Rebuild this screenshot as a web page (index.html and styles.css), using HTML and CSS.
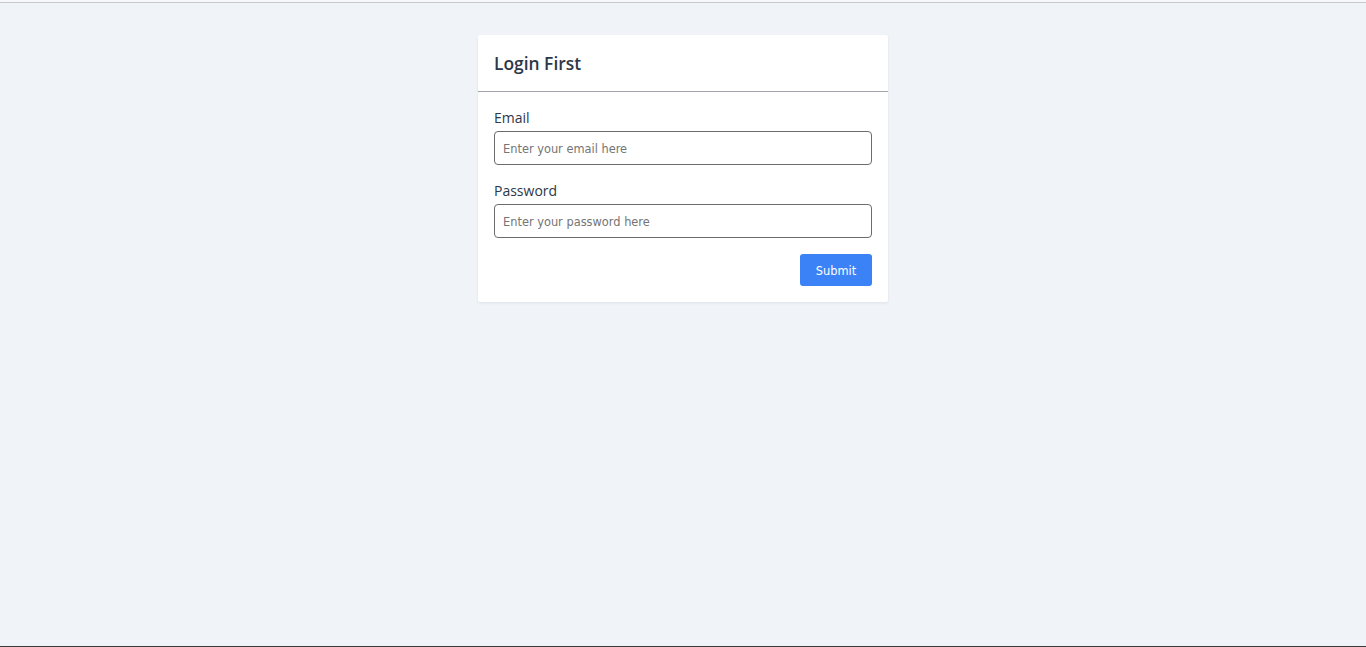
FILE: index.html
```html
<!DOCTYPE html>
<html>
<head>
<meta charset="utf-8">
<link rel="stylesheet" href="styles.css">
</head>
<body>
<div class="topline"></div>
<main class="page">
  <form class="card">
    <div class="card-header"><h1 class="title">Login First</h1></div>
    <div class="card-body">
      <label class="label" for="email">Email</label>
      <input class="input" id="email" type="text" placeholder="Enter your email here">
      <label class="label label-gap" for="pw">Password</label>
      <input class="input" id="pw" type="password" placeholder="Enter your password here">
      <div class="actions"><button type="button" class="btn">Submit</button></div>
    </div>
  </form>
</main>
<div class="bottomline"></div>
</body>
</html>
```
FILE: styles.css
```css
html, body { margin: 0; padding: 0; height: 100%; }
body {
  background: #f0f3f7;
  font-family: "Open Sans", "Noto Sans", sans-serif;
  color: #2d3748;
  display: flex;
  flex-direction: column;
}
.topline { height: 2px; background: #f7f8f9; border-bottom: 1px solid #c4c8cb; }
.page { flex: 1; display: flex; justify-content: center; align-items: flex-start; padding-top: 32px; }
.card {
  width: 410px;
  background: #fff;
  box-shadow: 0 1px 3px rgba(0,0,0,0.08);
  border-radius: 2px;
}
.card-header { height: 56px; border-bottom: 1px solid #a0a4a8; padding: 0 16px; display: flex; align-items: center; }
.title { margin: 0; font-size: 17.4px; font-weight: 600; color: #2d3748; padding-top: 0; }
.card-body { padding: 16px 16px 16px; display: flex; flex-direction: column; }
.label { font-size: 14px; line-height: 20px; color: #2d3748; margin-bottom: 3px; margin-top: 0; }
.label-gap { margin-top: 16px; }
.input {
  box-sizing: border-box;
  height: 34px;
  width: 100%;
  border: 1px solid #6b6b6b;
  border-radius: 4px;
  padding: 2px 8px 0;
  font-family: "DejaVu Sans", sans-serif;
  font-size: 11.4px;
  color: #333;
  background: #fff;
  outline: none;
}
.input::placeholder { color: #757575; font-family: "DejaVu Sans", sans-serif; }
.actions { display: flex; justify-content: flex-end; margin-top: 16px; }
.btn {
  width: 72px; height: 32px;
  background: #3b82f6; color: #fff;
  border: none; border-radius: 3px;
  font-family: "DejaVu Sans", sans-serif; font-size: 11.4px;
  padding: 2px 0 0;
}
.bottomline { height: 1px; background: #3a3a3a; }
```
